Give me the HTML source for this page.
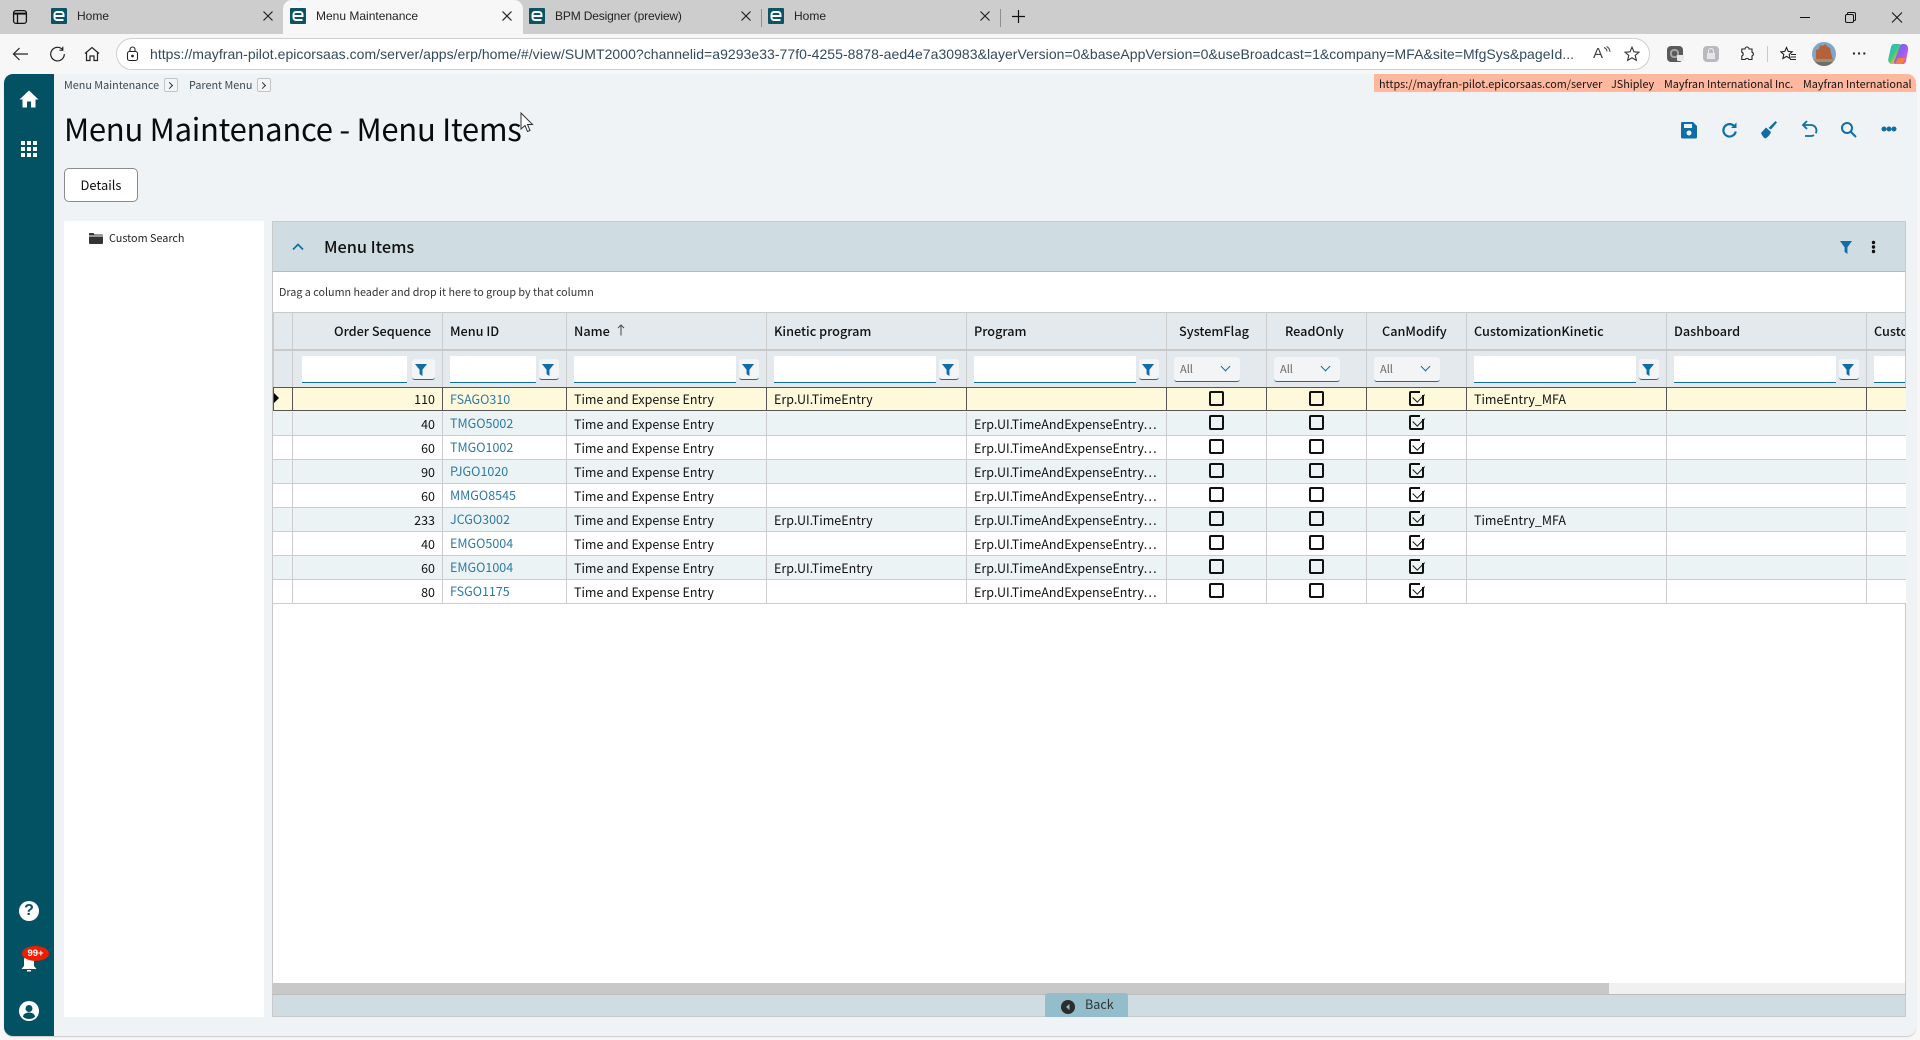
<!DOCTYPE html>
<html lang="en"><head><meta charset="utf-8"><title>Menu Maintenance</title>
<style>
html,body{margin:0;padding:0;width:1920px;height:1040px;overflow:hidden;background:#f7f7f7}
*{box-sizing:border-box}
body{position:relative;font-family:"Noto Sans CJK JP","Liberation Sans",sans-serif;color:#111}
.a,.t,svg.a{position:absolute}
.t{white-space:nowrap}
.b{font-family:"Liberation Sans",sans-serif;font-size:12px;color:#222;line-height:16px;top:8px}
.fav{position:absolute;top:8px}
.cl{position:absolute;top:11px;width:10px;height:10px}
.sep{position:absolute;top:9px;width:1px;height:18px;background:#8f8f8f}
.bc{font-size:10.8px;color:#3a4750;line-height:16px;top:77px}
.cbx{position:absolute;top:78px;width:14px;height:14px;border:1px solid #c4c4c4;border-radius:2px;background:#f3f5f7}
.cbx:after{content:"";position:absolute;left:2px;top:4px;width:4px;height:4px;border-top:1px solid #333;border-right:1px solid #333;transform:rotate(45deg)}
.og{font-size:10.8px;line-height:16px;color:#111;top:75.500px}
.r{position:absolute;left:273px;width:1633px;height:24px;border-bottom:1px solid #ccc;font-size:12.5px;line-height:24px;overflow:hidden}
.r.o{background:#ecf3f5}
.r.w{background:#fff}
.r.s{background:#fff9dc;height:24px;border-top:1px solid #555;border-bottom:1px solid #555}
.v{position:absolute;top:0;bottom:0;width:1px;background:#ccc}
.s .v{background:#555}
.c{position:absolute;top:0;white-space:nowrap;color:#111}
.s .c{top:-1px}
.n{right:1471px;text-align:right}
.l{left:177px;color:#2c7aa6;top:-1px}
.s .l{top:-1px}
.cb{position:absolute;top:3px;width:15px;height:15px;border:2px solid #111;border-radius:2px;background:inherit}
.cb.k:before{content:"";position:absolute;right:-2px;top:-2px;width:4px;height:4px;background:inherit}
.cb.k:after{content:"";position:absolute;left:1.500px;top:0;width:10px;height:5.500px;border-left:1.600px solid #111;border-bottom:1.600px solid #111;transform:rotate(-45deg)}
.h{position:absolute;font-size:12.7px;font-weight:500;line-height:20px;top:321px;white-space:nowrap;color:#111}
.i{position:absolute;top:356px;height:27px;background:#fff;border-bottom:1px solid #0f6ea5}
.fb{position:absolute;top:359px;width:20px;height:21px;background:#f3f4f5;border-bottom:1px solid #0f6ea5;border-radius:3px}
.fb:after,.fi{content:"";position:absolute;background:#0f6ea5;clip-path:polygon(0 0,100% 0,62% 48%,62% 100%,38% 84%,38% 48%)}
.fb:after{left:3px;top:5px;width:12px;height:12px}
.se{position:absolute;top:357px;width:66px;height:25px;background:#f3f4f5;border-bottom:1px solid #0f6ea5;border-radius:3px;font-size:11px;line-height:24px;padding-left:6px;color:#666}
.ch{position:absolute;width:7px;height:7px;border-right:1.6px solid #0f6ea5;border-bottom:1.6px solid #0f6ea5;transform:rotate(45deg);left:48px;top:6px}
</style></head><body>

<!-- tab strip -->
<div class="a" style="left:0;top:0;width:1920px;height:34px;background:#cdcdcd"></div>
<div class="a" style="left:283px;top:0;width:240px;height:34px;background:#f7f7f7;border-radius:9px 9px 0 0"></div>
<svg class="a" style="left:12px;top:9px" width="16" height="16" viewBox="0 0 16 16" fill="none" stroke="#111" stroke-width="1.3"><rect x="1.600" y="1.600" width="12.800" height="12.800" rx="2.400"/><path d="M1.600 4.600H14.400" stroke-width="2"/><path d="M5.500 4.600V14.400"/></svg>
<svg class="fav" style="left:51px" width="16" height="16" viewBox="0 0 16 16"><rect width="16" height="16" rx="1" fill="#0a5465"/><path d="M3.500 8H12.500V6.500A2.500 2.500 0 0 0 10 4H6A2.500 2.500 0 0 0 3.500 6.500V9.500A2.500 2.500 0 0 0 6 12H12.500" stroke="#fff" stroke-width="2" fill="none"/></svg>
<div class="t b" style="left:77px">Home</div>
<svg class="cl" style="left:263px" viewBox="0 0 10 10" stroke="#222" stroke-width="1.200"><path d="M.5.5l9 9M9.500.5l-9 9"/></svg>
<svg class="fav" style="left:290px" width="16" height="16" viewBox="0 0 16 16"><rect width="16" height="16" rx="1" fill="#0a5465"/><path d="M3.500 8H12.500V6.500A2.500 2.500 0 0 0 10 4H6A2.500 2.500 0 0 0 3.500 6.500V9.500A2.500 2.500 0 0 0 6 12H12.500" stroke="#fff" stroke-width="2" fill="none"/></svg>
<div class="t b" style="left:316px">Menu Maintenance</div>
<svg class="cl" style="left:502px" viewBox="0 0 10 10" stroke="#222" stroke-width="1.200"><path d="M.5.5l9 9M9.500.5l-9 9"/></svg>
<svg class="fav" style="left:529px" width="16" height="16" viewBox="0 0 16 16"><rect width="16" height="16" rx="1" fill="#0a5465"/><path d="M3.500 8H12.500V6.500A2.500 2.500 0 0 0 10 4H6A2.500 2.500 0 0 0 3.500 6.500V9.500A2.500 2.500 0 0 0 6 12H12.500" stroke="#fff" stroke-width="2" fill="none"/></svg>
<div class="t b" style="left:555px;letter-spacing:-.15px">BPM Designer (preview)</div>
<svg class="cl" style="left:741px" viewBox="0 0 10 10" stroke="#222" stroke-width="1.200"><path d="M.5.5l9 9M9.500.5l-9 9"/></svg>
<div class="sep" style="left:761px"></div>
<svg class="fav" style="left:768px" width="16" height="16" viewBox="0 0 16 16"><rect width="16" height="16" rx="1" fill="#0a5465"/><path d="M3.500 8H12.500V6.500A2.500 2.500 0 0 0 10 4H6A2.500 2.500 0 0 0 3.500 6.500V9.500A2.500 2.500 0 0 0 6 12H12.500" stroke="#fff" stroke-width="2" fill="none"/></svg>
<div class="t b" style="left:794px">Home</div>
<svg class="cl" style="left:980px" viewBox="0 0 10 10" stroke="#222" stroke-width="1.200"><path d="M.5.5l9 9M9.500.5l-9 9"/></svg>
<div class="sep" style="left:1000px"></div>
<svg class="a" style="left:1011px;top:9px" width="15" height="15" viewBox="0 0 15 15" stroke="#111" stroke-width="1.200"><path d="M7.500 1V14M1 7.500H14"/></svg>
<svg class="a" style="left:1799px;top:11px" width="110" height="13" viewBox="0 0 110 13" fill="none" stroke="#111" stroke-width="1"><path d="M1 6.500H11"/><rect x="46.500" y="3.500" width="8" height="8" rx="1.500"/><path d="M48.500 3.500V2.500a1 1 0 0 1 1-1H55a1.500 1.500 0 0 1 1.500 1.500V8.500a1 1 0 0 1-1 1H54.500"/><path d="M93 1.500L103 11.500M103 1.500L93 11.500"/></svg>

<!-- toolbar -->
<svg class="a" style="left:12px;top:46px" width="92" height="16" viewBox="0 0 92 16" fill="none" stroke="#222" stroke-width="1.200"><path d="M16 8H1.500M7.500 2L1.500 8l6 6"/><path d="M50.500 3.500a6.800 6.800 0 1 0 1.800 4.500M50.800.8v3.400h-3.400"/><path d="M73 7.500L80 1.500l7 6M74.500 6.500V14.500H78V10h4v4.500h3.500V6.500"/></svg>
<div class="a" style="left:116px;top:38px;width:1534px;height:32px;background:#fff;border:1px solid #cfcfcf;border-radius:16px"></div>
<svg class="a" style="left:126px;top:46px" width="13" height="16" viewBox="0 0 13 16" fill="none" stroke="#222" stroke-width="1.100"><rect x="1.500" y="5.500" width="10" height="9" rx="2"/><path d="M4 5.500V3.500a2.500 2.500 0 0 1 5 0V5.500"/><circle cx="6.500" cy="10" r=".8" fill="#222"/></svg>
<svg class="a" style="left:150px;top:44px" width="1426" height="20"><text x="0" y="15" textLength="1424" lengthAdjust="spacing" font-family="Liberation Sans,sans-serif" font-size="14" fill="#334a5c">https://mayfran-pilot.epicorsaas.com/server/apps/erp/home/#/view/SUMT2000?channelid=a9293e33-77f0-4255-8878-aed4e7a30983&amp;layerVersion=0&amp;baseAppVersion=0&amp;useBroadcast=1&amp;company=MFA&amp;site=MfgSys&amp;pageId...</text></svg>
<div class="t" style="left:1593px;top:45px;font:15px/18px 'Liberation Sans',sans-serif;color:#444">A</div>
<svg class="a" style="left:1603px;top:46px" width="8" height="10" viewBox="0 0 8 10" fill="none" stroke="#444" stroke-width="1"><path d="M1 1.500c2 .8 3 2.300 3 4M3.500 .5c2 1 3.500 2.700 3.500 5.500"/></svg>
<svg class="a" style="left:1624px;top:46px" width="16" height="16" viewBox="0 0 16 16" fill="none" stroke="#333" stroke-width="1.100"><path d="M8 1.200l2 4.600 5 .4-3.800 3.300 1.200 4.900L8 11.800l-4.400 2.600 1.200-4.900L1 6.200l5-.4z"/></svg>
<div class="a" style="left:1667px;top:46px;width:16px;height:16px;border-radius:4px;background:#5a5a5a"></div>
<div class="a" style="left:1670px;top:49px;width:9px;height:9px;border:2px solid #a5a5a5;border-radius:4px"></div>
<div class="a" style="left:1677px;top:55px;width:7px;height:6px;background:#e8e8e8;border-radius:1px"></div>
<div class="a" style="left:1703px;top:46px;width:16px;height:16px;border-radius:4px;background:#b9b9be"></div>
<svg class="a" style="left:1703px;top:46px" width="16" height="16" viewBox="0 0 16 16" fill="none" stroke="#eee" stroke-width="1"><rect x="4" y="7" width="8" height="6" fill="#e6e6e6" stroke="none"/><path d="M5.500 7V5a2.500 2.500 0 0 1 5 0V7"/></svg>
<svg class="a" style="left:1739px;top:46px" width="16" height="16" viewBox="0 0 16 16" fill="none" stroke="#222" stroke-width="1.100"><path d="M6 3a2 2 0 0 1 4 0h3v3.200a2 2 0 0 1 0 3.800v3.500H9.800a2 2 0 0 0-3.600 0H2.800V10a2 2 0 0 0 0-3.800V3z"/></svg>
<div class="a" style="left:1767px;top:46px;width:1px;height:16px;background:#c9c9c9"></div>
<svg class="a" style="left:1780px;top:46px" width="17" height="16" viewBox="0 0 17 16" fill="none" stroke="#222" stroke-width="1.100"><path d="M6.500 1.500l1.700 3.900 4 .4-3 2.700.9 4-3.600-2.100-3.600 2.100.9-4-3-2.700 4-.4z"/><path d="M11 8.500h5M11 11h5M10 13.500h6"/></svg>
<svg class="a" style="left:1812px;top:42px" width="24" height="24" viewBox="0 0 24 24"><defs><clipPath id="av"><circle cx="12" cy="12" r="12"/></clipPath></defs><g clip-path="url(#av)"><rect width="24" height="24" fill="#7fa6c4"/><path d="M4 18V8l3-1 1-4 3 1 2-2 3 3 2 1 1 5 2 7z" fill="#b5623a"/><rect y="17" width="24" height="3" fill="#a08f70"/><rect y="20" width="24" height="4" fill="#6b6f66"/></g></svg>
<div class="t" style="left:1852px;top:44px;font:bold 14px/18px 'Liberation Sans',sans-serif;color:#222;letter-spacing:.5px">···</div>
<svg class="a" style="left:1887px;top:43px" width="22" height="22" viewBox="0 0 22 22"><defs><linearGradient id="cp" x1="0" y1="0" x2="1" y2="1"><stop offset="0" stop-color="#1fb3e8"/><stop offset=".45" stop-color="#37c98a"/><stop offset=".7" stop-color="#f7b52c"/><stop offset="1" stop-color="#ef4d7c"/></linearGradient><linearGradient id="cq" x1="0" y1="0" x2="1" y2="1"><stop offset="0" stop-color="#3d7cf2"/><stop offset=".5" stop-color="#9b5cf0"/><stop offset="1" stop-color="#ee5fb0"/></linearGradient></defs><path d="M7 1h5a2 2 0 0 1 2 2L9 19c-.5 1.500-1.500 2-3 2H5C2 21 .5 18 1.500 15L4 4C4.500 2 5.500 1 7 1z" fill="url(#cp)"/><path d="M16 21H8a2 2 0 0 1-1-2l6-16c.5-1.500 1.500-2 3-2h1c3 0 4.500 3 4 6L19 18c-.5 2-1.500 3-3 3z" fill="url(#cq)"/><path d="M6 21h7c2 0 3.500-1 4-3l1-3H11L9 19c-.5 1.500-1.500 2-3 2z" fill="#f5803e"/></svg>

<!-- content -->
<div class="a" style="left:4px;top:74px;width:1912px;height:962px;background:#eff3f6;border-radius:9px;box-shadow:0 1px 1px #ccc"></div>
<div class="a" style="left:4px;top:74px;width:50px;height:962px;background:#035264;border-radius:9px 0 0 9px"></div>
<svg class="a" style="left:19px;top:90px" width="20" height="18" viewBox="0 0 20 18" fill="#fff"><path d="M10 .5L.5 9.500h3V17.500h4.500V11.500h4V17.500h4.500V9.500h3z"/></svg>
<svg class="a" style="left:21px;top:141px" width="16" height="16" fill="#fff"><rect x="0" y="0" width="4" height="4"/><rect x="6" y="0" width="4" height="4"/><rect x="12" y="0" width="4" height="4"/><rect x="0" y="6" width="4" height="4"/><rect x="6" y="6" width="4" height="4"/><rect x="12" y="6" width="4" height="4"/><rect x="0" y="12" width="4" height="4"/><rect x="6" y="12" width="4" height="4"/><rect x="12" y="12" width="4" height="4"/></svg>
<div class="a" style="left:19px;top:901px;width:20px;height:20px;border-radius:50%;background:#fff;color:#035264;font:bold 16px/20px 'Liberation Sans',sans-serif;text-align:center">?</div>
<svg class="a" style="left:21px;top:955px" width="16" height="17" viewBox="0 0 16 17" fill="#fff"><path d="M8 0a5 5 0 0 0-5 5v6l-2.500 3h15L13 11V5a5 5 0 0 0-5-5z"/><rect x="6" y="15" width="4" height="1.500"/></svg>
<div class="a" style="left:22px;top:946px;width:27px;height:15px;border-radius:50%;background:#f01e00;color:#fff;font:bold 9.500px/15px 'Liberation Sans',sans-serif;text-align:center">99+</div>
<svg class="a" style="left:19px;top:1001px" width="20" height="20" viewBox="0 0 20 20"><circle cx="10" cy="10" r="10" fill="#fff"/><circle cx="10" cy="7.500" r="3.500" fill="#035264"/><path d="M3.800 15.500c1-3 3.500-4 6.200-4s5.200 1 6.200 4c-1.500 1.600-3.800 2.500-6.200 2.500s-4.700-.9-6.200-2.500z" fill="#035264"/></svg>

<div class="t bc" style="left:64px">Menu Maintenance</div><div class="cbx" style="left:164px"></div>
<div class="t bc" style="left:189px">Parent Menu</div><div class="cbx" style="left:257px"></div>

<div class="a" style="left:1374px;top:74px;width:542px;height:18px;background:#ffb89e;border-radius:0 9px 0 0"></div>
<div class="t og" style="left:1379px">https://mayfran-pilot.epicorsaas.com/server</div>
<div class="t og" style="left:1611px">JShipley</div>
<div class="t og" style="left:1664px">Mayfran International Inc.</div>
<div class="t og" style="left:1803px">Mayfran International</div>

<div class="t" style="left:64px;top:105px;font-size:31px;letter-spacing:-.27px;line-height:46px;color:#0a0a0a">Menu Maintenance - Menu Items</div>
<svg class="a" style="left:520px;top:112px" width="14" height="22" viewBox="0 0 14 22"><path d="M1 1V17l4-3.500 2.500 6 2.500-1-2.500-6h5z" fill="#fff" stroke="#333" stroke-width="1"/></svg>

<!-- page toolbar -->
<svg class="a" style="left:1680px;top:121px" width="18" height="18" viewBox="0 0 18 18" fill="#0f6ea5"><path d="M2 1h11l4 4v11a1.500 1.500 0 0 1-1.500 1.500h-13A1.500 1.500 0 0 1 1 16V2.500A1.500 1.500 0 0 1 2 1z"/><rect x="4" y="3" width="8" height="4" fill="#eff3f6"/><circle cx="9" cy="12" r="2.500" fill="#eff3f6"/></svg>
<svg class="a" style="left:1721px;top:121px" width="17" height="18" viewBox="0 0 17 18" fill="none" stroke="#0f6ea5" stroke-width="2.200"><path d="M13.500 5.500a6.200 6.200 0 1 0 1.200 5"/><path d="M15.500 1.500v5.500H10" stroke-width="0" fill="#0f6ea5"/></svg>
<svg class="a" style="left:1760px;top:120px" width="18" height="19" viewBox="0 0 18 19" fill="#0f6ea5"><path d="M1 13L6 7.500l5 4.500C10 15 7 18 5 18.500 3.500 17.500 2 15.500 1 13z"/><path d="M8.500 8L15.500 1l1.500 1.500-6 7z"/></svg>
<svg class="a" style="left:1801px;top:120px" width="17" height="20" viewBox="0 0 17 20" fill="none" stroke="#0f6ea5" stroke-width="1.800"><path d="M6 1L2 5l4 4"/><path d="M2.500 5H10a5.500 5.500 0 0 1 0 11H4" stroke-dasharray="19 2.500"/></svg>
<svg class="a" style="left:1840px;top:121px" width="17" height="17" viewBox="0 0 17 17" fill="none" stroke="#0f6ea5" stroke-width="2"><circle cx="7" cy="7" r="5"/><path d="M10.500 10.500L16 16"/></svg>
<svg class="a" style="left:1881px;top:126px" width="16" height="6" fill="#0f6ea5"><circle cx="3" cy="3" r="2.500"/><circle cx="8" cy="3" r="2.500"/><circle cx="13" cy="3" r="2.500"/></svg>

<div class="a" style="left:64px;top:168px;width:74px;height:34px;background:#fff;border:1px solid #8b8b8b;border-radius:5px;font-size:12.900px;line-height:31px;text-align:center;color:#111">Details</div>

<!-- left tree -->
<div class="a" style="left:64px;top:221px;width:200px;height:796px;background:#fff"></div>
<svg class="a" style="left:89px;top:233px" width="14" height="11" viewBox="0 0 14 11" fill="#333"><path d="M0 1a1 1 0 0 1 1-1h3.500l1 1.500H13a1 1 0 0 1 1 1H0z"/><path d="M0 3.500h14V10a1 1 0 0 1-1 1H1a1 1 0 0 1-1-1z"/></svg>
<div class="t" style="left:109px;top:230px;font-size:10.800px;line-height:16px;color:#222">Custom Search</div>

<!-- main panel -->
<div class="a" style="left:272px;top:221px;width:1634px;height:796px;background:#fff;border:1px solid #c9c9c9"></div>
<div class="a" style="left:272px;top:221px;width:1634px;height:51px;background:#cfdce1;border:1px solid #c9c9c9;border-bottom:1px solid #9cc3cb"></div>
<svg class="a" style="left:292px;top:243px" width="12" height="8" viewBox="0 0 12 8" fill="none" stroke="#0f6ea5" stroke-width="1.700"><path d="M1 6.500L6 1.500l5 5"/></svg>
<div class="t" style="left:324px;top:234px;font-size:16.300px;font-weight:500;line-height:24px;color:#111">Menu Items</div>
<div class="fi" style="left:1840px;top:241px;width:12px;height:13px"></div>
<svg class="a" style="left:1871px;top:240px" width="5" height="14" fill="#111"><circle cx="2.500" cy="2.500" r="1.700"/><circle cx="2.500" cy="7" r="1.700"/><circle cx="2.500" cy="11.500" r="1.700"/></svg>
<div class="t" style="left:279px;top:285px;font-size:10.750px;line-height:16px;color:#333">Drag a column header and drop it here to group by that column</div>

<!-- header + filter rows -->
<div class="a" style="left:273px;top:312px;width:1632px;height:75px;background:#e3e9ed;border-top:1px solid #c9c9c9"></div>
<div class="a" style="left:273px;top:349px;width:1632px;height:2px;background:#c9c9c9"></div>
<div class="a" style="left:273px;top:312px;width:1px;height:292px;background:#ccc"></div>
<div class="a" style="left:292px;top:312px;width:1px;height:75px;background:#ccc"></div>
<div class="a" style="left:442px;top:312px;width:1px;height:75px;background:#ccc"></div>
<div class="a" style="left:566px;top:312px;width:1px;height:75px;background:#ccc"></div>
<div class="a" style="left:766px;top:312px;width:1px;height:75px;background:#ccc"></div>
<div class="a" style="left:966px;top:312px;width:1px;height:75px;background:#ccc"></div>
<div class="a" style="left:1166px;top:312px;width:1px;height:75px;background:#ccc"></div>
<div class="a" style="left:1266px;top:312px;width:1px;height:75px;background:#ccc"></div>
<div class="a" style="left:1366px;top:312px;width:1px;height:75px;background:#ccc"></div>
<div class="a" style="left:1466px;top:312px;width:1px;height:75px;background:#ccc"></div>
<div class="a" style="left:1666px;top:312px;width:1px;height:75px;background:#ccc"></div>
<div class="a" style="left:1866px;top:312px;width:1px;height:75px;background:#ccc"></div>

<div class="h" style="left:334px">Order Sequence</div>
<div class="h" style="left:450px">Menu ID</div>
<div class="h" style="left:574px">Name</div>
<svg class="a" style="left:617px;top:324px" width="8" height="12" viewBox="0 0 8 12" fill="none" stroke="#555" stroke-width="1.100"><path d="M4 11.500V1M1 4l3-3 3 3"/></svg>
<div class="h" style="left:774px">Kinetic program</div>
<div class="h" style="left:974px">Program</div>
<div class="h" style="left:1179px">SystemFlag</div>
<div class="h" style="left:1285px">ReadOnly</div>
<div class="h" style="left:1382px">CanModify</div>
<div class="h" style="left:1474px">CustomizationKinetic</div>
<div class="h" style="left:1674px">Dashboard</div>
<div class="h" style="left:1874px;width:31px;overflow:hidden">Custo</div>

<div class="i" style="left:302px;width:105px"></div><div class="fb" style="left:412px;width:23px"></div>
<div class="i" style="left:450px;width:86px"></div><div class="fb" style="left:539px"></div>
<div class="i" style="left:574px;width:162px"></div><div class="fb" style="left:739px"></div>
<div class="i" style="left:774px;width:162px"></div><div class="fb" style="left:939px"></div>
<div class="i" style="left:974px;width:162px"></div><div class="fb" style="left:1139px"></div>
<div class="se" style="left:1174px">All<span class="ch"></span></div>
<div class="se" style="left:1274px">All<span class="ch"></span></div>
<div class="se" style="left:1374px">All<span class="ch"></span></div>
<div class="i" style="left:1474px;width:162px"></div><div class="fb" style="left:1639px"></div>
<div class="i" style="left:1674px;width:162px"></div><div class="fb" style="left:1839px"></div>
<div class="i" style="left:1874px;width:31px"></div>

<!-- rows -->
<div class="r s" style="top:387px"><i class="v" style="left:0"></i><i class="v" style="left:19px"></i><i class="v" style="left:169px"></i><i class="v" style="left:293px"></i><i class="v" style="left:493px"></i><i class="v" style="left:693px"></i><i class="v" style="left:893px"></i><i class="v" style="left:993px"></i><i class="v" style="left:1093px"></i><i class="v" style="left:1193px"></i><i class="v" style="left:1393px"></i><i class="v" style="left:1593px"></i>
<span class="c n">110</span><span class="c l">FSAGO310</span><span class="c" style="left:301px">Time and Expense Entry</span><span class="c" style="left:501px">Erp.UI.TimeEntry</span><i class="cb" style="left:936px"></i><i class="cb" style="left:1036px"></i><i class="cb k" style="left:1136px"></i><span class="c" style="left:1201px">TimeEntry_MFA</span></div>
<div class="a" style="left:274px;top:393px;width:0;height:0;border-left:5px solid #000;border-top:5px solid transparent;border-bottom:5px solid transparent"></div>

<div class="a" style="left:273px;top:411px;width:1633px;height:1px;background:#ecf3f5"></div>
<div class="r o" style="top:412px"><i class="v" style="left:19px"></i><i class="v" style="left:169px"></i><i class="v" style="left:293px"></i><i class="v" style="left:493px"></i><i class="v" style="left:693px"></i><i class="v" style="left:893px"></i><i class="v" style="left:993px"></i><i class="v" style="left:1093px"></i><i class="v" style="left:1193px"></i><i class="v" style="left:1393px"></i><i class="v" style="left:1593px"></i>
<span class="c n">40</span><span class="c l">TMGO5002</span><span class="c" style="left:301px">Time and Expense Entry</span><span class="c" style="left:701px">Erp.UI.TimeAndExpenseEntry…</span><i class="cb" style="left:936px"></i><i class="cb" style="left:1036px"></i><i class="cb k" style="left:1136px"></i></div>

<div class="r w" style="top:436px"><i class="v" style="left:19px"></i><i class="v" style="left:169px"></i><i class="v" style="left:293px"></i><i class="v" style="left:493px"></i><i class="v" style="left:693px"></i><i class="v" style="left:893px"></i><i class="v" style="left:993px"></i><i class="v" style="left:1093px"></i><i class="v" style="left:1193px"></i><i class="v" style="left:1393px"></i><i class="v" style="left:1593px"></i>
<span class="c n">60</span><span class="c l">TMGO1002</span><span class="c" style="left:301px">Time and Expense Entry</span><span class="c" style="left:701px">Erp.UI.TimeAndExpenseEntry…</span><i class="cb" style="left:936px"></i><i class="cb" style="left:1036px"></i><i class="cb k" style="left:1136px"></i></div>

<div class="r o" style="top:460px"><i class="v" style="left:19px"></i><i class="v" style="left:169px"></i><i class="v" style="left:293px"></i><i class="v" style="left:493px"></i><i class="v" style="left:693px"></i><i class="v" style="left:893px"></i><i class="v" style="left:993px"></i><i class="v" style="left:1093px"></i><i class="v" style="left:1193px"></i><i class="v" style="left:1393px"></i><i class="v" style="left:1593px"></i>
<span class="c n">90</span><span class="c l">PJGO1020</span><span class="c" style="left:301px">Time and Expense Entry</span><span class="c" style="left:701px">Erp.UI.TimeAndExpenseEntry…</span><i class="cb" style="left:936px"></i><i class="cb" style="left:1036px"></i><i class="cb k" style="left:1136px"></i></div>

<div class="r w" style="top:484px"><i class="v" style="left:19px"></i><i class="v" style="left:169px"></i><i class="v" style="left:293px"></i><i class="v" style="left:493px"></i><i class="v" style="left:693px"></i><i class="v" style="left:893px"></i><i class="v" style="left:993px"></i><i class="v" style="left:1093px"></i><i class="v" style="left:1193px"></i><i class="v" style="left:1393px"></i><i class="v" style="left:1593px"></i>
<span class="c n">60</span><span class="c l">MMGO8545</span><span class="c" style="left:301px">Time and Expense Entry</span><span class="c" style="left:701px">Erp.UI.TimeAndExpenseEntry…</span><i class="cb" style="left:936px"></i><i class="cb" style="left:1036px"></i><i class="cb k" style="left:1136px"></i></div>

<div class="r o" style="top:508px"><i class="v" style="left:19px"></i><i class="v" style="left:169px"></i><i class="v" style="left:293px"></i><i class="v" style="left:493px"></i><i class="v" style="left:693px"></i><i class="v" style="left:893px"></i><i class="v" style="left:993px"></i><i class="v" style="left:1093px"></i><i class="v" style="left:1193px"></i><i class="v" style="left:1393px"></i><i class="v" style="left:1593px"></i>
<span class="c n">233</span><span class="c l">JCGO3002</span><span class="c" style="left:301px">Time and Expense Entry</span><span class="c" style="left:501px">Erp.UI.TimeEntry</span><span class="c" style="left:701px">Erp.UI.TimeAndExpenseEntry…</span><i class="cb" style="left:936px"></i><i class="cb" style="left:1036px"></i><i class="cb k" style="left:1136px"></i><span class="c" style="left:1201px">TimeEntry_MFA</span></div>

<div class="r w" style="top:532px"><i class="v" style="left:19px"></i><i class="v" style="left:169px"></i><i class="v" style="left:293px"></i><i class="v" style="left:493px"></i><i class="v" style="left:693px"></i><i class="v" style="left:893px"></i><i class="v" style="left:993px"></i><i class="v" style="left:1093px"></i><i class="v" style="left:1193px"></i><i class="v" style="left:1393px"></i><i class="v" style="left:1593px"></i>
<span class="c n">40</span><span class="c l">EMGO5004</span><span class="c" style="left:301px">Time and Expense Entry</span><span class="c" style="left:701px">Erp.UI.TimeAndExpenseEntry…</span><i class="cb" style="left:936px"></i><i class="cb" style="left:1036px"></i><i class="cb k" style="left:1136px"></i></div>

<div class="r o" style="top:556px"><i class="v" style="left:19px"></i><i class="v" style="left:169px"></i><i class="v" style="left:293px"></i><i class="v" style="left:493px"></i><i class="v" style="left:693px"></i><i class="v" style="left:893px"></i><i class="v" style="left:993px"></i><i class="v" style="left:1093px"></i><i class="v" style="left:1193px"></i><i class="v" style="left:1393px"></i><i class="v" style="left:1593px"></i>
<span class="c n">60</span><span class="c l">EMGO1004</span><span class="c" style="left:301px">Time and Expense Entry</span><span class="c" style="left:501px">Erp.UI.TimeEntry</span><span class="c" style="left:701px">Erp.UI.TimeAndExpenseEntry…</span><i class="cb" style="left:936px"></i><i class="cb" style="left:1036px"></i><i class="cb k" style="left:1136px"></i></div>

<div class="r w" style="top:580px"><i class="v" style="left:19px"></i><i class="v" style="left:169px"></i><i class="v" style="left:293px"></i><i class="v" style="left:493px"></i><i class="v" style="left:693px"></i><i class="v" style="left:893px"></i><i class="v" style="left:993px"></i><i class="v" style="left:1093px"></i><i class="v" style="left:1193px"></i><i class="v" style="left:1393px"></i><i class="v" style="left:1593px"></i>
<span class="c n">80</span><span class="c l">FSGO1175</span><span class="c" style="left:301px">Time and Expense Entry</span><span class="c" style="left:701px">Erp.UI.TimeAndExpenseEntry…</span><i class="cb" style="left:936px"></i><i class="cb" style="left:1036px"></i><i class="cb k" style="left:1136px"></i></div>

<!-- footer -->
<div class="a" style="left:273px;top:983px;width:1632px;height:11px;background:#f0f0f0"></div>
<div class="a" style="left:272px;top:983px;width:1337px;height:11px;background:#c8c8c8"></div>
<div class="a" style="left:272px;top:994px;width:1634px;height:23px;background:#cfdce1;border:1px solid #c9c9c9;border-top:1px solid #bbb"></div>
<div class="a" style="left:1045px;top:993px;width:83px;height:24px;background:#93bdcb;border-radius:3px 3px 0 0"></div>
<svg class="a" style="left:1061px;top:1000px" width="14" height="14" viewBox="0 0 14 14"><circle cx="7" cy="7" r="7" fill="#2c2c2c"/><path d="M8.500 4L5 7l3.500 3z" fill="#93bdcb"/></svg>
<div class="t" style="left:1085px;top:995px;font-size:12.600px;line-height:18px;color:#333">Back</div>
</body></html>
